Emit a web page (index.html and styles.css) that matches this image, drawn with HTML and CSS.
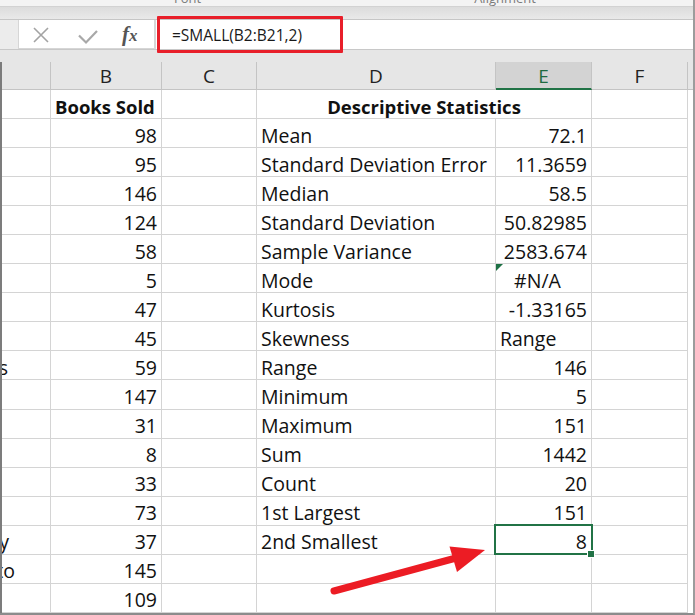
FILE: index.html
```html
<!DOCTYPE html>
<html lang="en">
<head>
  <meta charset="UTF-8" />
  <title>SMALL function</title>
  <link rel="stylesheet" href="styles.css">
</head>
<body>
<div class="window">

  <div class="ribbon">
    <span class="group-font">Font</span>
    <span class="group-align">Alignment</span>
  </div>
  <div class="ribbon-edge"></div>

  <div class="formula-bar">
    <div class="fx-buttons">
      <svg width="136" height="28" viewBox="0 0 136 28">
        <path d="M15 8 L29 22 M29 8 L15 22" stroke="#a3a3a3" stroke-width="1.6" fill="none"/>
        <path d="M60 15.5 L67 22.5 L78 11" stroke="#a8a8a8" stroke-width="2.2" fill="none"/>
        <text x="103" y="21" class="fx-f">f</text>
        <text x="110" y="21" class="fx-x">x</text>
      </svg>
    </div>
    <div class="formula-input">=SMALL(B2:B21,2)</div>
  </div>

  <div class="gap"></div>

  <div class="sheet">
    <div class="head"></div>
    <div class="head">B</div>
    <div class="head">C</div>
    <div class="head">D</div>
    <div class="head active">E</div>
    <div class="head">F</div>
    <div class="head last"></div>

    <div class="cell"></div>
    <div class="cell bold">Books Sold</div>
    <div class="cell"></div>
    <div class="cell bold title">Descriptive Statistics</div>
    <div class="cell"></div>
    <div class="edge"></div>

    <div class="cell"></div>
    <div class="cell num">98</div>
    <div class="cell"></div>
    <div class="cell">Mean</div>
    <div class="cell num">72.1</div>
    <div class="cell"></div>
    <div class="edge"></div>

    <div class="cell"></div>
    <div class="cell num">95</div>
    <div class="cell"></div>
    <div class="cell">Standard Deviation Error</div>
    <div class="cell num">11.3659</div>
    <div class="cell"></div>
    <div class="edge"></div>

    <div class="cell"></div>
    <div class="cell num">146</div>
    <div class="cell"></div>
    <div class="cell">Median</div>
    <div class="cell num">58.5</div>
    <div class="cell"></div>
    <div class="edge"></div>

    <div class="cell"></div>
    <div class="cell num">124</div>
    <div class="cell"></div>
    <div class="cell">Standard Deviation</div>
    <div class="cell num">50.82985</div>
    <div class="cell"></div>
    <div class="edge"></div>

    <div class="cell"></div>
    <div class="cell num">58</div>
    <div class="cell"></div>
    <div class="cell">Sample Variance</div>
    <div class="cell num">2583.674</div>
    <div class="cell"></div>
    <div class="edge"></div>

    <div class="cell"></div>
    <div class="cell num">5</div>
    <div class="cell"></div>
    <div class="cell">Mode</div>
    <div class="cell error flag">#N/A</div>
    <div class="cell"></div>
    <div class="edge"></div>

    <div class="cell"></div>
    <div class="cell num">47</div>
    <div class="cell"></div>
    <div class="cell">Kurtosis</div>
    <div class="cell num">-1.33165</div>
    <div class="cell"></div>
    <div class="edge"></div>

    <div class="cell"></div>
    <div class="cell num">45</div>
    <div class="cell"></div>
    <div class="cell">Skewness</div>
    <div class="cell">Range</div>
    <div class="cell"></div>
    <div class="edge"></div>

    <div class="cell clip end-s">Classics</div>
    <div class="cell num">59</div>
    <div class="cell"></div>
    <div class="cell">Range</div>
    <div class="cell num">146</div>
    <div class="cell"></div>
    <div class="edge"></div>

    <div class="cell"></div>
    <div class="cell num">147</div>
    <div class="cell"></div>
    <div class="cell">Minimum</div>
    <div class="cell num">5</div>
    <div class="cell"></div>
    <div class="edge"></div>

    <div class="cell"></div>
    <div class="cell num">31</div>
    <div class="cell"></div>
    <div class="cell">Maximum</div>
    <div class="cell num">151</div>
    <div class="cell"></div>
    <div class="edge"></div>

    <div class="cell"></div>
    <div class="cell num">8</div>
    <div class="cell"></div>
    <div class="cell">Sum</div>
    <div class="cell num">1442</div>
    <div class="cell"></div>
    <div class="edge"></div>

    <div class="cell"></div>
    <div class="cell num">33</div>
    <div class="cell"></div>
    <div class="cell">Count</div>
    <div class="cell num">20</div>
    <div class="cell"></div>
    <div class="edge"></div>

    <div class="cell"></div>
    <div class="cell num">73</div>
    <div class="cell"></div>
    <div class="cell">1st Largest</div>
    <div class="cell num">151</div>
    <div class="cell"></div>
    <div class="edge"></div>

    <div class="cell clip end-y">Fantasy</div>
    <div class="cell num">37</div>
    <div class="cell"></div>
    <div class="cell">2nd Smallest</div>
    <div class="cell num selected">8</div>
    <div class="cell"></div>
    <div class="edge"></div>

    <div class="cell clip end-to">Toronto</div>
    <div class="cell num">145</div>
    <div class="cell"></div>
    <div class="cell"></div>
    <div class="cell"></div>
    <div class="cell"></div>
    <div class="edge"></div>

    <div class="cell"></div>
    <div class="cell num">109</div>
    <div class="cell"></div>
    <div class="cell"></div>
    <div class="cell"></div>
    <div class="cell"></div>
    <div class="edge"></div>
  </div>

  <div class="callout-box"></div>
  <svg class="arrow" width="695" height="615" viewBox="0 0 695 615">
    <line x1="334" y1="591" x2="456" y2="558" stroke="#ec1c24" stroke-width="7" stroke-linecap="round"/>
    <polygon points="485,550 449.5,546.5 457,572" fill="#ec1c24"/>
  </svg>

</div>
</body>
</html>
```

FILE: styles.css
```css
* {
  box-sizing: border-box;
}

body {
  margin: 0;
  width: 695px;
  height: 615px;
  overflow: hidden;
  background: #fff;
  font-family: 'Open Sans', sans-serif;
  color: #111;
}

.window {
  position: relative;
  width: 695px;
  height: 615px;
  overflow: hidden;
  border-right: 2px solid #9c9c9c;
  border-bottom: 2px solid #8c8c8c;
}

/* ribbon remnant */
.ribbon {
  height: 6px;
  overflow: hidden;
  background: #f3f3f3;
  display: flex;
  font-size: 13px;
  color: #7a7a7a;
}

.ribbon span {
  line-height: 14px;
  margin-top: -9px;
}

.group-font {
  margin-left: 174px;
}

.group-align {
  margin-left: 273px;
}

.ribbon-edge {
  height: 14px;
  background: linear-gradient(#dcdcdc, #e9e9e9);
  border-top: 1px solid #d2d2d2;
  border-bottom: 1px solid #c6c6c6;
}

/* formula bar */
.formula-bar {
  display: flex;
  height: 30px;
  padding-left: 18px;
  background: #ececec;
  border-bottom: 1px solid #c8c8c8;
}

.fx-buttons {
  width: 137px;
  height: 29px;
  background: #fff;
  border: 1px solid #d6d6d6;
  border-top: none;
}

.fx-buttons svg {
  display: block;
}

.fx-f {
  font-family: 'Liberation Serif', serif;
  font-style: italic;
  font-weight: bold;
  font-size: 21px;
  fill: #555;
}

.fx-x {
  font-family: 'Liberation Serif', serif;
  font-style: italic;
  font-weight: bold;
  font-size: 17px;
  fill: #555;
}

.formula-input {
  flex: 1;
  height: 29px;
  background: #fff;
  border-left: 1px solid #d6d6d6;
  padding-left: 16px;
  display: flex;
  align-items: center;
  font-size: 15.5px;
  color: #1a1a1a;
}

.gap {
  height: 12px;
  background: #e6e6e6;
}

/* sheet grid */
.sheet {
  display: grid;
  grid-template-columns: 49px 111px 95px 239px 96px 96px 5px;
  grid-template-rows: 28px repeat(18, 29.06px);
  border-left: 2px solid #7c7c7c;
}

.head {
  background: #e6e6e6;
  border-right: 1px solid #c4c4c4;
  border-bottom: 1px solid #c4c4c4;
  display: flex;
  align-items: center;
  justify-content: center;
  font-size: 19px;
  color: #222;
  padding-top: 1px;
}

.head.active {
  background: #d3d3d3;
  border-bottom: 2px solid #217346;
  color: #1e6a40;
}

.head.last {
  border-right: none;
}

.cell {
  position: relative;
  border-right: 1px solid #d4d4d4;
  border-bottom: 1px solid #d4d4d4;
  display: flex;
  align-items: center;
  padding: 4px 4px 0 4px;
  font-size: 19.5px;
  white-space: nowrap;
}

.edge {
  background: #fff;
}

.num {
  justify-content: flex-end;
}

.error {
  justify-content: center;
  padding-left: 0;
  padding-right: 12px;
}

.bold {
  font-weight: bold;
  font-size: 18.5px;
}

.title {
  grid-column: span 2;
  justify-content: center;
}

.clip {
  overflow: hidden;
  justify-content: flex-end;
  padding-left: 0;
}

.end-s {
  padding-right: 42px;
}

.end-y {
  padding-right: 41px;
}

.end-to {
  padding-right: 35px;
}

.flag::before {
  content: "";
  position: absolute;
  top: 0;
  left: 0;
  border-top: 7px solid #1e7145;
  border-right: 7px solid transparent;
}

.selected::after {
  content: "";
  position: absolute;
  top: -2px;
  left: -2px;
  right: -2px;
  bottom: -1px;
  border: 2px solid #217346;
}

.selected::before {
  content: "";
  position: absolute;
  right: -4px;
  bottom: -4px;
  width: 6px;
  height: 6px;
  background: #217346;
  border: 1px solid #fff;
  z-index: 1;
}

/* annotations */
.callout-box {
  position: absolute;
  left: 157px;
  top: 16px;
  width: 186px;
  height: 37px;
  border: 3px solid #e81f2a;
  border-radius: 1px;
}

.arrow {
  position: absolute;
  left: 0;
  top: 0;
  pointer-events: none;
}
```
